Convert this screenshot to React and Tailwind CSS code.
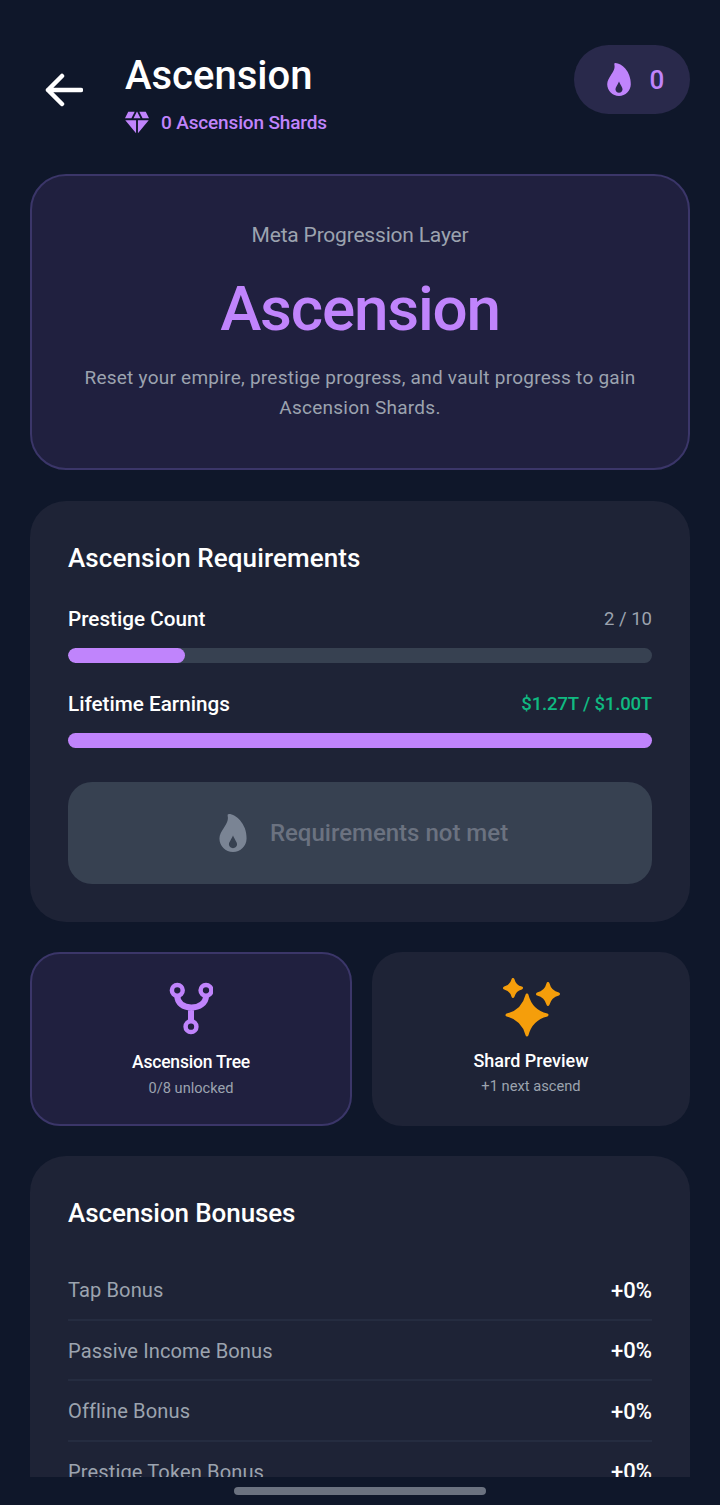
import React from "react";
import { MdDiamond } from "react-icons/md";

const bonuses = [
  { label: "Tap Bonus", value: "+0%" },
  { label: "Passive Income Bonus", value: "+0%" },
  { label: "Offline Bonus", value: "+0%" },
  { label: "Prestige Token Bonus", value: "+0%" },
];

const Flame = ({ className }) => (
  <svg viewBox="96 32 320 448" className={className} fill="currentColor">
    <path
      fillRule="evenodd"
      d="M394.23 197.56a300.43 300.43 0 00-53.37-90C301.2 61.65 249.05 32 208 32a16 16 0 00-15.48 20c13.87 53-14.88 97.07-45.31 143.72C122 234.36 96 274.27 96 320c0 88.22 71.78 160 160 160s160-71.78 160-160c0-43.3-7.32-84.49-21.77-122.44zM256 436c-28 0-48-20-48-46 0-30 28-56 48-106 20 50 48 76 48 106 0 26-20 46-48 46z"
    />
  </svg>
);

const TreeIcon = () => (
  <svg viewBox="0 0 44 56" className="w-[44px] h-[56px] text-[#c084fc]" fill="none" stroke="currentColor">
    <g strokeWidth="4.500">
      <circle cx="8.300" cy="9.300" r="5.400" />
      <circle cx="37" cy="9.300" r="5.400" />
      <circle cx="22" cy="45.700" r="5.400" />
    </g>
    <path strokeWidth="6" d="M8.300 15c0 7 6 11.500 14 11.500S37 22 37 15M22 26v14" />
  </svg>
);

const star = (x, y, r) => {
  const k = r * 0.2;
  return `M${x} ${y - r}Q${x + k} ${y - k} ${x + r} ${y}Q${x + k} ${y + k} ${x} ${y + r}Q${x - k} ${y + k} ${x - r} ${y}Q${x - k} ${y - k} ${x} ${y - r}Z`;
};

const Sparkles = () => (
  <svg viewBox="0 0 60 62" className="w-[60px] h-[62px] text-[#f59e0b]" fill="currentColor" stroke="currentColor" strokeWidth="3" strokeLinejoin="round">
    <path d={star(26, 40, 20)} />
    <path d={star(12, 13, 8.500)} />
    <path d={star(47, 19, 10.500)} />
  </svg>
);

export default function App() {
  return (
    <div
      className="w-[720px] h-[1505px] bg-[#0f172a] flex flex-col overflow-hidden"
      style={{ fontFamily: 'Roboto, sans-serif' }}
    >
      <div className="flex-1 overflow-hidden px-[30px] pt-[45px]">
        {/* Header */}
        <div className="flex items-start justify-between h-[129px]">
          <div className="flex items-start">
            <svg viewBox="0 0 38 34" className="w-[38px] h-[34px] ml-[15px] mt-[28px] text-white" fill="none" stroke="currentColor" strokeWidth="4.500" strokeLinecap="round" strokeLinejoin="round">
              <path d="M36 17H3M17 3L3 17l14 14" />
            </svg>
            <div className="ml-[42px]">
              <h1 className="text-[40px] leading-[60px] pt-[1px] font-medium text-white">Ascension</h1>
              <div className="flex items-center text-[#c084fc] mt-[3px]">
                <MdDiamond className="w-[30px] h-[30px] -ml-[3px] -my-[1px]" />
                <span className="ml-[9px] text-[19px] leading-[28px] font-medium tracking-[-0.15px]">0 Ascension Shards</span>
              </div>
            </div>
          </div>
          <div className="w-[116px] h-[69px] rounded-full bg-[#29294b] flex items-center justify-center gap-[19px] pl-[7px] text-[#c084fc]">
            <Flame className="w-[24px] h-[33px]" />
            <span className="text-[26px] font-medium pt-[2px]">0</span>
          </div>
        </div>

        {/* Hero */}
        <section className="h-[296px] rounded-[36px] border-2 border-[#3b3669] bg-[#20203f] flex flex-col items-center pt-[44px]">
          <p className="text-[21px] leading-[30px] text-[#9ca3af] tracking-[-0.2px]">Meta Progression Layer</p>
          <h2 className="text-[62px] leading-[80px] mt-[19px] font-medium text-[#c084fc] tracking-[-1.2px]">Ascension</h2>
          <p className="text-[19px] leading-[30px] text-[#9ca3af] text-center mt-[14px] w-[590px] tracking-[0.25px]">
            Reset your empire, prestige progress, and vault progress to gain Ascension Shards.
          </p>
        </section>

        {/* Requirements */}
        <section className="mt-[31px] h-[421px] rounded-[36px] bg-[#1e2336] px-[38px] pt-[38px]">
          <h3 className="text-[26px] leading-[38px] font-medium text-white tracking-[0.1px]">Ascension Requirements</h3>
          <div className="flex items-center justify-between mt-[28px] h-[30px]">
            <span className="text-[20.700px] font-medium text-white">Prestige Count</span>
            <span className="text-[18.500px] text-[#9ca3af]">2 / 10</span>
          </div>
          <div className="h-[15px] mt-[13px] rounded-full bg-[#374151] overflow-hidden">
            <div className="h-full rounded-full bg-[#c084fc] w-1/5" />
          </div>
          <div className="flex items-center justify-between mt-[27px] h-[30px]">
            <span className="text-[20.700px] font-medium text-white">Lifetime Earnings</span>
            <span className="text-[18.500px] font-medium text-[#10b981] tracking-[-0.15px]">$1.27T / $1.00T</span>
          </div>
          <div className="h-[15px] mt-[13px] rounded-full bg-[#c084fc]" />
          <div className="h-[102px] mt-[34px] rounded-[24px] bg-[#374151] flex items-center justify-center gap-[23px] pl-[7px]">
            <Flame className="w-[28px] h-[38px] text-[#7a8494]" />
            <span className="text-[24px] font-medium text-[#6b7280]">Requirements not met</span>
          </div>
        </section>

        {/* Tiles */}
        <div className="mt-[30px] flex gap-[20px] h-[174px]">
          <div className="w-[322px] rounded-[30px] border-2 border-[#3b3669] bg-[#20203f] flex flex-col items-center pt-[27px]">
            <TreeIcon />
            <p className="text-[17.500px] leading-[26px] mt-[12px] font-medium text-white tracking-[-0.2px]">Ascension Tree</p>
            <p className="text-[14.600px] leading-[24px] mt-[1px] text-[#9ca3af]">0/8 unlocked</p>
          </div>
          <div className="flex-1 rounded-[30px] bg-[#1e2336] flex flex-col items-center pt-[23px]">
            <Sparkles />
            <p className="text-[18px] leading-[26px] mt-[11px] font-medium text-white">Shard Preview</p>
            <p className="text-[14.700px] leading-[24px] text-[#9ca3af]">+1 next ascend</p>
          </div>
        </div>

        {/* Bonuses */}
        <section className="mt-[30px] rounded-t-[36px] bg-[#1e2336] px-[38px] pt-[38px] h-[400px]">
          <h3 className="text-[26px] leading-[38px] font-medium text-white tracking-[-0.1px]">Ascension Bonuses</h3>
          <div className="mt-[28px]">
            {bonuses.map((b) => (
              <div key={b.label} className="flex items-center justify-between h-[60.500px] pt-[2px] border-b-2 border-[#252c40]">
                <span className="text-[20.100px] text-[#9ca3af] tracking-[0.1px]">{b.label}</span>
                <span className="text-[22px] font-medium text-white">{b.value}</span>
              </div>
            ))}
          </div>
        </section>
      </div>

      {/* Gesture bar */}
      <div className="h-[28px] shrink-0 flex justify-center pt-[10px]">
        <div className="w-[252px] h-[8px] rounded-full bg-[#6b7280]" />
      </div>
    </div>
  );
}
